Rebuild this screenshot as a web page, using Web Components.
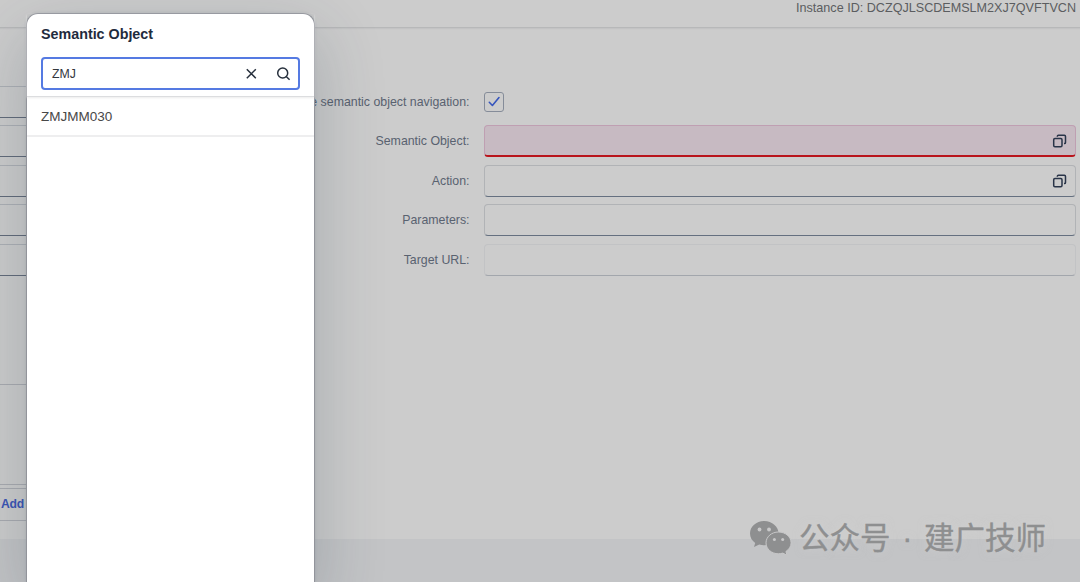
<!DOCTYPE html>
<html lang="en">
<head>
<meta charset="utf-8">
<title>Semantic Object</title>
<style>
  body{
    margin:0;
    width:1080px;
    height:582px;
    overflow:hidden;
    background:#cccccc;
    font-family:"Liberation Sans", Arial, sans-serif;
  }
</style>
</head>
<body>
<app-page>
  <app-header slot="header">Instance ID: DCZQJLSCDEMSLM2XJ7QVFTVCN</app-header>
  <side-form slot="side"></side-form>
  <form-row slot="form" label="Enable semantic object navigation:"><check-box></check-box></form-row>
  <form-row slot="form" label="Semantic Object:"><input-field state="error" help></input-field></form-row>
  <form-row slot="form" label="Action:"><input-field help></input-field></form-row>
  <form-row slot="form" label="Parameters:"><input-field></input-field></form-row>
  <form-row slot="form" label="Target URL:"><input-field state="readonly"></input-field></form-row>
</app-page>
<select-dialog title-text="Semantic Object">
  <search-field slot="search" value="ZMJ"></search-field>
  <list-item>ZMJMM030</list-item>
</select-dialog>
<water-mark>公众号 · 建广技师</water-mark>

<script>
// every element only has to give its styles and markup
class BaseElement extends HTMLElement{

  constructor(){
    super();
    this.attachShadow({mode:"open"});
  }

  connectedCallback(){
    const template = document.createElement('template');
    template.innerHTML = `<style>*{box-sizing:border-box}${this.getStyles()}</style>${this.getTemplate()}`;
    this.shadowRoot.appendChild(template.content.cloneNode(true));
  }
}

class AppPage extends BaseElement{
  getStyles(){
    return `
      :host{display:grid;grid-template-rows:28px 511px 43px;height:582px}
      main{display:grid;grid-template-columns:27px 1fr;padding-right:4px}
      .form{padding:54px 0 0 0}
      footer{background:#c3c4c6}
    `;
  }
  getTemplate(){
    return `
      <slot name="header"></slot>
      <main>
        <slot name="side"></slot>
        <div class="form"><slot name="form"></slot></div>
      </main>
      <footer></footer>
    `;
  }
}

class AppHeader extends BaseElement{
  getStyles(){
    return `
      :host{display:block;box-sizing:border-box;height:28px;padding-right:4px;border-bottom:1px solid #b7b8b9;
        text-align:right;font-size:12.6px;line-height:17px;color:#5b5d60;white-space:nowrap;box-shadow:0 1px 1px #c3c3c4}
    `;
  }
  getTemplate(){
    return `<slot></slot>`;
  }
}

// right-hand ends of the left column, the dialog covers the rest
class SideForm extends BaseElement{
  getStyles(){
    return `
      :host{display:flex;flex-direction:column;padding-top:57.8px}
      .field{height:32px;margin-bottom:7.5px;border-top:1px solid #adb0b5;border-bottom:1px solid #626b7a}
      .panel{height:101px;margin-top:101px;border:solid #a9abb0;border-width:1px 0}
      .bar{height:33px;margin-top:3px;padding-left:1px;border:solid #a9abb0;border-width:1px 0;
        font-size:12.2px;font-weight:bold;line-height:31px;letter-spacing:-.2px;color:#3b55b5}
    `;
  }
  getTemplate(){
    return `
      <div class="field"></div><div class="field"></div><div class="field"></div>
      <div class="field"></div><div class="field"></div>
      <div class="panel"></div>
      <div class="bar">Add</div>
    `;
  }
}

class FormRow extends BaseElement{
  getStyles(){
    return `
      :host{display:flex;align-items:center;height:39.5px}
      label{flex:0 0 442.5px;margin-right:14.5px;text-align:right;font-size:12.35px;line-height:16px;color:#596270;white-space:nowrap}
      .control{flex:1;display:flex}
    `;
  }
  getTemplate(){
    return `
      <label>${this.getAttribute('label')}</label>
      <div class="control"><slot></slot></div>
    `;
  }
}

class CheckBox extends BaseElement{
  getStyles(){
    return `
      :host{display:block;box-sizing:border-box;width:20px;height:20px;border:1px solid #858c99;border-radius:3px}
      svg{display:block}
    `;
  }
  getTemplate(){
    return `
      <svg width="18" height="18" viewBox="0 0 18 18" fill="none" stroke="#3655bd" stroke-width="1.6" stroke-linecap="round" stroke-linejoin="round">
        <path d="M4.3 9.3 7.4 12.5 14 4.5"/>
      </svg>
    `;
  }
}

class InputField extends BaseElement{
  getStyles(){
    return `
      :host{display:flex;box-sizing:border-box;flex:1;align-items:center;justify-content:flex-end;height:32.4px;
        padding-right:8px;border:1px solid #b1b3b6;border-bottom-color:#657080;border-radius:4px}
      :host([state="error"]){background:#c7bac2;border:1px solid #bf9fb2;border-bottom:2px solid #b9141c}
      :host([state="readonly"]){border-color:#c2c3c5;border-bottom-color:#a2a6ac}
      svg{display:block}
    `;
  }
  getTemplate(){
    if(!this.hasAttribute('help')) return '';
    return `
      <svg width="15" height="14" viewBox="0 0 15 14" fill="none" stroke="#293448" stroke-width="1.5">
        <rect x="1.7" y="4.5" width="8.3" height="8.3" rx="1.2"/>
        <path d="M5.3 2.7V2.4q0-1.1 1.1-1.1h6q1.1 0 1.1 1.1v6q0 1.1-1.1 1.1h-.4"/>
      </svg>
    `;
  }
}

class SelectDialog extends BaseElement{
  getStyles(){
    return `
      :host{position:absolute;left:26px;top:13px;box-sizing:border-box;width:289px;height:569px;background:#fff;
        border:1px solid #92949b;border-bottom:0;border-radius:12px 12px 0 0;
        box-shadow:0 0 3px rgba(34,53,72,.12), 0 24px 66px 6px rgba(34,53,72,.2)}
      header{height:83px;padding:0 14px;border-bottom:1px solid #dcdddf;box-shadow:0 1px 2px #ececec}
      h1{margin:0 0 3px;font-size:14.3px;line-height:40px;color:#1f2b3d}
    `;
  }
  getTemplate(){
    return `
      <header>
        <h1>${this.getAttribute('title-text')}</h1>
        <slot name="search"></slot>
      </header>
      <slot></slot>
    `;
  }
}

class SearchField extends BaseElement{
  getStyles(){
    return `
      :host{display:flex;box-sizing:border-box;align-items:center;height:33px;padding:0 7px 0 9px;
        border:2px solid #557ae2;border-radius:4px;font-size:12.3px;color:#33373d}
      span{flex:1}
      svg{display:block}
      .clear{margin-right:18px}
    `;
  }
  getTemplate(){
    return `
      <span>${this.getAttribute('value')}</span>
      <svg class="clear" width="12" height="12" viewBox="0 0 12 12" fill="none" stroke="#27303d" stroke-width="1.5">
        <path d="M.8 1.2l9 9M9.8 1.2l-9 9"/>
      </svg>
      <svg width="15" height="14" viewBox="0 0 15 14" fill="none" stroke="#27303d" stroke-width="1.5">
        <circle cx="6.7" cy="6" r="5"/><path d="M10.2 9.5l3.4 3.3"/>
      </svg>
    `;
  }
}

class ListItem extends BaseElement{
  getStyles(){
    return `
      :host{display:block;box-sizing:border-box;height:40px;padding-left:14px;border-bottom:2px solid #eeeeef;
        font-size:13.5px;line-height:39px;color:#484848}
    `;
  }
  getTemplate(){
    return `<slot></slot>`;
  }
}

class WaterMark extends BaseElement{
  getStyles(){
    return `
      :host{position:absolute;left:749px;top:516px;display:flex;align-items:center;height:44px;white-space:nowrap;
        color:#8e8f90}
      svg{display:block;margin-right:7px}
      span{font-family:"Liberation Sans", "Noto Sans CJK SC", sans-serif;font-size:30.5px;line-height:44px;
        word-spacing:3.2px;-webkit-text-stroke:.4px #8e8f90;text-shadow:0 0 8px rgba(215,215,215,.5)}
    `;
  }
  getTemplate(){
    return `
      <svg width="43" height="36" viewBox="0 0 43 36">
        <path fill="#8e8f90" d="M15.2 1C7.3 1 1 6.5 1 13.4c0 4 2 7.2 5.2 9.5L5 27l5.2-2.6c1.8.5 3.4.8 5 .8 8 0 14.3-5.3 14.3-11.9S23.1 1 15.2 1z"/>
        <path fill="#8e8f90" stroke="#c8c8c9" d="M29.5 12C22.6 12 17 16.8 17 22.9s5.6 10.9 12.5 10.9c1.4 0 2.9-.3 4.3-.7l4.2 2.1-1.1-3.7c3.1-2 5.2-5.1 5.2-8.6C42.1 16.8 36.4 12 29.5 12z"/>
        <g fill="#c9c9ca"><circle cx="10.5" cy="9.5" r="1.9"/><circle cx="20" cy="9.5" r="1.9"/><circle cx="25.4" cy="19.5" r="1.5"/><circle cx="33.7" cy="19.5" r="1.5"/></g>
      </svg>
      <span><slot></slot></span>
    `;
  }
}

customElements.define('app-page', AppPage);
customElements.define('app-header', AppHeader);
customElements.define('side-form', SideForm);
customElements.define('form-row', FormRow);
customElements.define('check-box', CheckBox);
customElements.define('input-field', InputField);
customElements.define('select-dialog', SelectDialog);
customElements.define('search-field', SearchField);
customElements.define('list-item', ListItem);
customElements.define('water-mark', WaterMark);
</script>
</body>
</html>
